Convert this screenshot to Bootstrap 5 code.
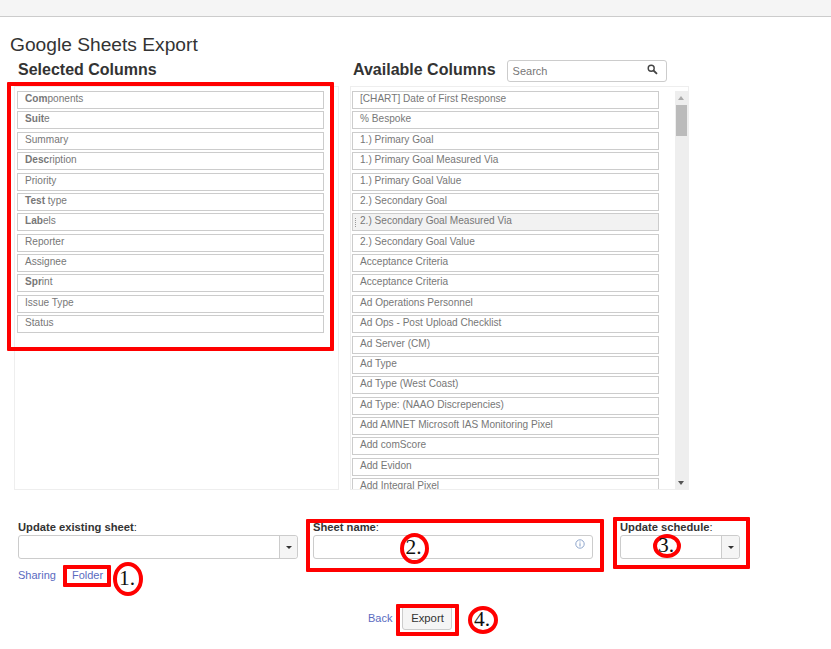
<!DOCTYPE html>
<html lang="en">
<head>
<meta charset="utf-8">
<title>Google Sheets Export</title>
<link rel="stylesheet" href="https://cdn.jsdelivr.net/npm/bootstrap@5.3.0/dist/css/bootstrap.min.css">
<style>
body{margin:0;background:#fff;font-family:"Liberation Sans",Arial,sans-serif;color:#333;font-size:12px;}
.stage{position:relative;width:831px;height:649px;overflow:hidden;}
.topstrip{height:17px;background:#f5f5f5;border-bottom:1px solid #ccc;}
.page-title{font-size:19.2px;line-height:24px;font-weight:400;margin:16px 0 0 10px;color:#333;}
.col-head{font-size:16px;line-height:22px;font-weight:700;color:#333;margin:0;}
.heads{height:29px;}
.head-left{width:350px;padding-left:18px;padding-top:2px;}
.head-right{padding-left:3px;gap:11px;padding-top:2px;}
.searchbox{width:160px;height:22px;margin-top:1px;border:1px solid #ccc;border-radius:3px;padding:0 8px 0 5px;font-size:11px;color:#777;}
.boxes{padding-left:14px;gap:11px;}
.colbox{height:404px;border:1px solid #eee;overflow:hidden;}
.box-sel{width:325px;padding:4px 0 0 2px;}
.box-avail{width:339px;padding:4px 0 0 1px;}
.item-stack{width:307px;}
.col-item{height:18px;margin-bottom:2.38px;border:1px solid #ccc;font-size:10.1px;line-height:14px;color:#777;padding:0 0 0 7px;white-space:nowrap;position:relative;background:#fff;}
.col-item b{font-weight:700;}
.col-item.hot{background:#f2f2f2;}
.grip{position:absolute;left:2px;top:4px;width:1px;height:9px;border-left:1px dotted #999;}
.fakebar{width:13px;margin-left:auto;background:#eee;height:100%;position:relative;}
.fakebar i{position:absolute;left:1px;top:14px;width:11px;height:31px;background:#bbb;display:block;}
.arrow-up,.arrow-down{position:absolute;left:3px;width:0;height:0;border-left:3.5px solid transparent;border-right:3.5px solid transparent;}
.arrow-up{top:5px;border-bottom:4px solid #aaa;}
.arrow-down{bottom:4px;border-top:4px solid #555;}
.fields{padding:30px 0 0 18px;}
.field-label{font-size:11.2px;line-height:15px;font-weight:700;color:#333;display:block;margin:0;}
.field-label span{font-weight:400;}
.pick,.textbox{height:24px;border:1px solid #ccc;border-radius:3px;background:#fff;}
.f-a{width:280px;margin-right:15px;}
.f-b{width:280px;margin-right:27px;}
.f-c{width:120px;}
.caretcell{width:18px;margin-left:auto;height:100%;background:#f5f5f5;border-left:1px solid #ccc;border-radius:0 3px 3px 0;}
.caretcell::after{content:"";border-left:3.5px solid transparent;border-right:3.5px solid transparent;border-top:3.5px solid #333;}
.textbox{padding-right:7px;}
.info-mark{margin-top:3px;}
.linkrow{padding:8px 0 0 18px;gap:16px;font-size:11px;line-height:16px;}
.linkrow a,.actionrow a{color:#5a6bbf;text-decoration:none;}
.actionrow{padding:23px 0 0 368px;gap:10px;font-size:11px;}
.exportbtn{width:50px;height:24px;padding:0;border:1px solid #ccc;border-radius:3px;background:#f5f5f5;font-size:11.3px;color:#333;line-height:22px;}
.mark-box{position:absolute;border:4px solid #f00;border-radius:1px;pointer-events:none;}
.mark-num{position:absolute;border:4px solid #f00;border-radius:50%;font-family:"Liberation Serif",serif;font-size:21.5px;color:#111;background:transparent;line-height:1;padding:0 2px 1px 0;}
</style>
</head>
<body>
<div class="stage">
  <div class="topstrip"></div>
  <h1 class="page-title">Google Sheets Export</h1>
  <div class="d-flex heads">
    <div class="head-left"><h2 class="col-head">Selected Columns</h2></div>
    <div class="d-flex align-items-start head-right">
      <h2 class="col-head">Available Columns</h2>
      <div class="searchbox d-flex align-items-center justify-content-between">
        <span>Search</span>
        <svg width="11" height="11" viewBox="0 0 11 11" class="mb-1"><circle cx="4.2" cy="4.2" r="3" fill="none" stroke="#444" stroke-width="1.4"/><path d="M6.5 6.5L10 9.8" stroke="#444" stroke-width="1.8"/></svg>
      </div>
    </div>
  </div>
  <div class="d-flex boxes">
    <div class="colbox box-sel">
      <div class="item-stack">
        <div class="col-item"><b>Com</b>ponents</div>
        <div class="col-item"><b>Suit</b>e</div>
        <div class="col-item">Summary</div>
        <div class="col-item"><b>Desc</b>ription</div>
        <div class="col-item">Priority</div>
        <div class="col-item"><b>Test</b> type</div>
        <div class="col-item"><b>Lab</b>els</div>
        <div class="col-item">Reporter</div>
        <div class="col-item">Assignee</div>
        <div class="col-item"><b>Spr</b>int</div>
        <div class="col-item">Issue Type</div>
        <div class="col-item">Status</div>
      </div>
    </div>
    <div class="colbox box-avail d-flex">
      <div class="item-stack">
        <div class="col-item">[CHART] Date of First Response</div>
        <div class="col-item">% Bespoke</div>
        <div class="col-item">1.) Primary Goal</div>
        <div class="col-item">1.) Primary Goal Measured Via</div>
        <div class="col-item">1.) Primary Goal Value</div>
        <div class="col-item">2.) Secondary Goal</div>
        <div class="col-item hot"><span class="grip"></span>2.) Secondary Goal Measured Via</div>
        <div class="col-item">2.) Secondary Goal Value</div>
        <div class="col-item">Acceptance Criteria</div>
        <div class="col-item">Acceptance Criteria</div>
        <div class="col-item">Ad Operations Personnel</div>
        <div class="col-item">Ad Ops - Post Upload Checklist</div>
        <div class="col-item">Ad Server (CM)</div>
        <div class="col-item">Ad Type</div>
        <div class="col-item">Ad Type (West Coast)</div>
        <div class="col-item">Ad Type: (NAAO Discrepencies)</div>
        <div class="col-item">Add AMNET Microsoft IAS Monitoring Pixel</div>
        <div class="col-item">Add comScore</div>
        <div class="col-item">Add Evidon</div>
        <div class="col-item">Add Integral Pixel</div>
      </div>
      <div class="fakebar"><span class="arrow-up"></span><i></i><span class="arrow-down"></span></div>
    </div>
  </div>
  <div class="d-flex fields">
    <div class="f-a">
      <label class="field-label">Update existing sheet<span>:</span></label>
      <div class="pick d-flex"><span class="caretcell d-flex align-items-center justify-content-center"></span></div>
    </div>
    <div class="f-b">
      <label class="field-label">Sheet name<span>:</span></label>
      <div class="textbox d-flex justify-content-end align-items-start">
        <svg width="10" height="10" viewBox="0 0 10 10" class="info-mark"><circle cx="5" cy="5" r="4.2" fill="none" stroke="#8fa6cc" stroke-width="1"/><path d="M5 4.2V7.6M5 2.4V3.4" stroke="#8fa6cc" stroke-width="1.1"/></svg>
      </div>
    </div>
    <div class="f-c">
      <label class="field-label">Update schedule<span>:</span></label>
      <div class="pick d-flex"><span class="caretcell d-flex align-items-center justify-content-center"></span></div>
    </div>
  </div>
  <div class="d-flex linkrow"><a href="#">Sharing</a><a href="#">Folder</a></div>
  <div class="d-flex align-items-center actionrow"><a href="#">Back</a><button type="button" class="exportbtn">Export</button></div>

  <div class="mark-box" style="left:7px;top:82px;width:327px;height:269px"></div>
  <div class="mark-box" style="left:63px;top:565px;width:48px;height:22px"></div>
  <div class="mark-box" style="left:306px;top:519px;width:298px;height:53px"></div>
  <div class="mark-box" style="left:613px;top:517px;width:137px;height:52px"></div>
  <div class="mark-box" style="left:396px;top:604px;width:63px;height:32px"></div>
  <div class="mark-num d-flex align-items-center justify-content-center" style="left:113px;top:562px;width:30px;height:34px">1.</div>
  <div class="mark-num d-flex align-items-center justify-content-center" style="left:400px;top:533px;width:29px;height:31px">2.</div>
  <div class="mark-num d-flex align-items-center justify-content-center" style="left:653px;top:534px;width:28px;height:24px">3.</div>
  <div class="mark-num d-flex align-items-center justify-content-center" style="left:468px;top:606px;width:30px;height:28px">4.</div>
</div>
<script src="https://cdn.jsdelivr.net/npm/bootstrap@5.3.0/dist/js/bootstrap.bundle.min.js"></script>
</body>
</html>
